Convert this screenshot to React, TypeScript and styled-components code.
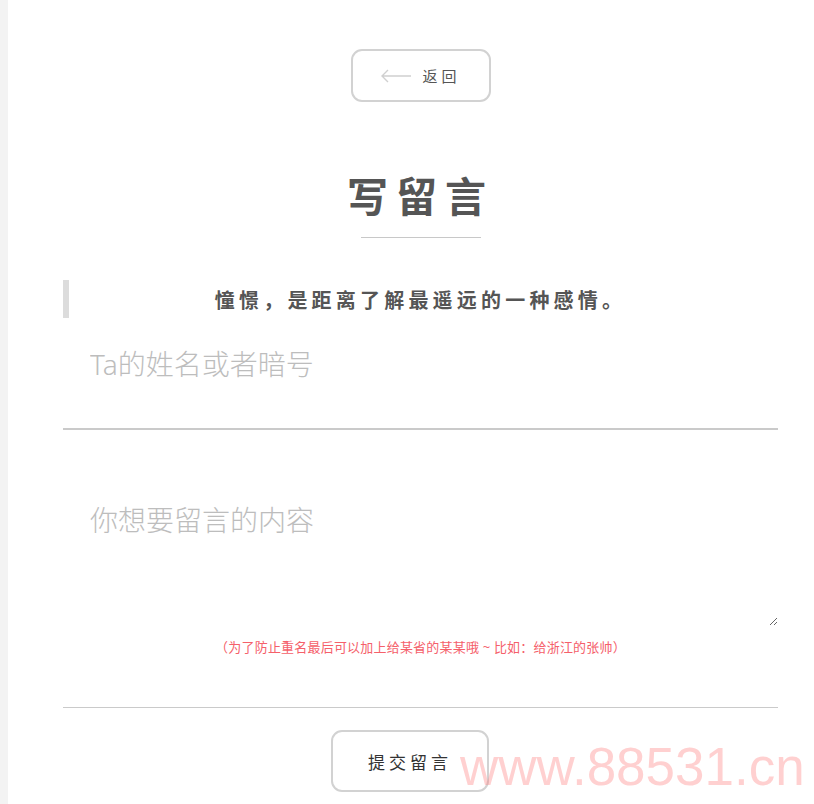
import styled, { createGlobalStyle } from 'styled-components';

const GlobalStyle = createGlobalStyle`
  html, body {
    margin: 0;
    padding: 0;
    background: #f3f3f3;
  }
  * {
    box-sizing: border-box;
  }
`;

const cjk = `"Noto Sans", "Noto Sans CJK SC", sans-serif`;

function App() {
  return (
    <>
      <GlobalStyle />
      <Page>
        <Content>
          <BackRow>
            <BackButton type="button">
              <Arrow width="32" height="14" viewBox="0 0 32 14">
                <path d="M31 7H2M8 1L2 7l6 6" fill="none" stroke="#d0d0d0" strokeWidth="1.4" />
              </Arrow>
              返回
            </BackButton>
          </BackRow>

          <Title>写留言</Title>
          <TitleRule />

          <Quote>憧憬，是距离了解最遥远的一种感情。</Quote>

          <NameInput placeholder="Ta的姓名或者暗号" />
          <MessageArea placeholder="你想要留言的内容" />

          <Hint>（为了防止重名最后可以加上给某省的某某哦 ~ 比如：给浙江的张帅）</Hint>
          <Divider />

          <SubmitButton type="button">提交留言</SubmitButton>
        </Content>
        <Watermark>www.88531.cn</Watermark>
      </Page>
    </>
  );
}

export default App;

const Page = styled.div`
  position: relative;
  margin-left: 8px;
  min-height: 804px;
  background: #fff;
  overflow: hidden;
`;

const Content = styled.div`
  display: flex;
  flex-direction: column;
  padding: 49px 36px 0 55px;
  font-family: ${cjk};
`;

const BackRow = styled.div`
  display: flex;
  justify-content: center;
`;

const BackButton = styled.button`
  display: flex;
  align-items: center;
  justify-content: center;
  gap: 10px;
  width: 140px;
  height: 53px;
  padding: 0;
  border: 2px solid #d2d2d2;
  border-radius: 11px;
  background: #fff;
  color: #555;
  font-family: ${cjk};
  font-size: 15px;
  letter-spacing: 4px;
  cursor: pointer;
`;

const Arrow = styled.svg`
  display: block;
`;

const Title = styled.h1`
  margin: 64px 0 0;
  text-align: center;
  font-size: 41px;
  line-height: 60px;
  font-weight: 700;
  letter-spacing: 8px;
  color: #555;
`;

const TitleRule = styled.div`
  align-self: center;
  width: 120px;
  height: 1px;
  margin: 11px 0 0;
  background: #c8c8c8;
`;

const Quote = styled.blockquote`
  margin: 42px 0 0;
  padding: 0 6px 0 0;
  height: 38px;
  border-left: 6px solid #dcdcdc;
  display: flex;
  align-items: center;
  justify-content: center;
  font-size: 20px;
  font-weight: 700;
  letter-spacing: 4.2px;
  color: #555;
`;

const NameInput = styled.input`
  margin-top: 11px;
  height: 101px;
  padding: 0 27px 30px;
  border: none;
  border-bottom: 2px solid #cacaca;
  outline: none;
  font-family: ${cjk};
  font-size: 28px;
  font-weight: 300;
  color: #555;
  background: transparent;

  &::placeholder {
    color: #bdbdbd;
  }
`;

const MessageArea = styled.textarea`
  margin-top: 29px;
  height: 167px;
  padding: 40px 27px 12px;
  border: none;
  outline: none;
  resize: vertical;
  font-family: ${cjk};
  font-size: 28px;
  font-weight: 300;
  color: #555;
  background: transparent;

  &::placeholder {
    color: #bdbdbd;
  }
`;

const Hint = styled.p`
  margin: 12px 0 0;
  text-align: center;
  font-size: 13px;
  line-height: 18px;
  letter-spacing: 0.2px;
  color: #f5606a;
`;

const Divider = styled.div`
  height: 1px;
  margin-top: 51px;
  background: #cacaca;
`;

const SubmitButton = styled.button`
  align-self: flex-start;
  margin: 22px 0 0 268px;
  width: 158px;
  height: 62px;
  border: 2px solid #d2d2d2;
  border-radius: 11px;
  background: #fff;
  color: #333;
  font-family: ${cjk};
  font-size: 17px;
  letter-spacing: 4px;
  padding: 0;
  cursor: pointer;
`;

const Watermark = styled.div`
  position: absolute;
  left: 452px;
  top: 737px;
  font-family: "Liberation Sans", Arial, sans-serif;
  font-size: 53px;
  line-height: 60px;
  color: rgba(255, 120, 120, 0.35);
  pointer-events: none;
  white-space: nowrap;
`;
